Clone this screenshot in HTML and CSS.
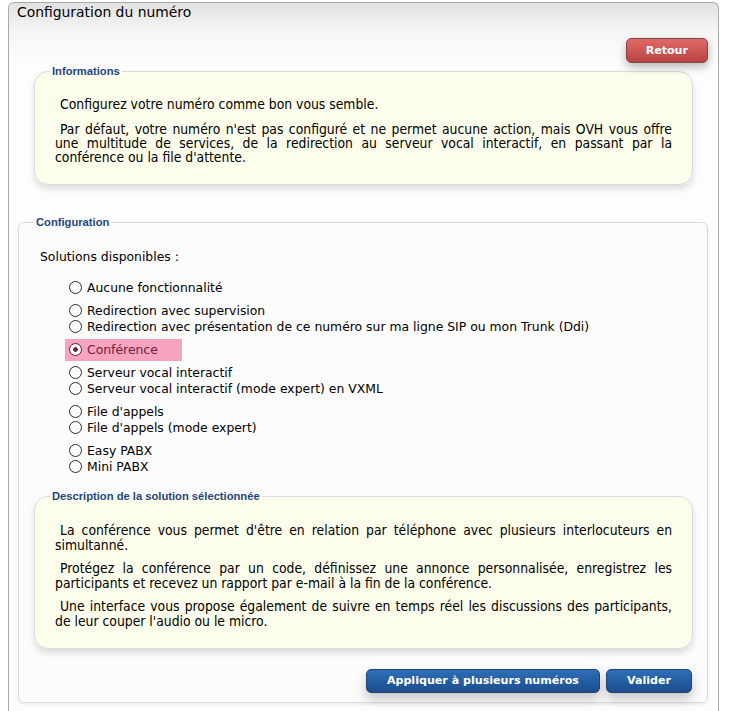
FILE: index.html
```html
<!DOCTYPE html>
<html lang="fr">
<head>
<meta charset="utf-8">
<title>Configuration du numéro</title>
<link rel="stylesheet" href="styles.css">
</head>
<body>
<div class="panel">
  <div class="panel-header">
    <h1 class="panel-title">Configuration du numéro</h1>
  </div>
  <div class="panel-body">
    <div class="top-actions">
      <button class="btn btn-red" type="button">Retour</button>
    </div>

    <fieldset class="box box-note box-info">
      <legend>Informations</legend>
      <p>Configurez votre numéro comme bon vous semble.</p>
      <p>Par défaut, votre numéro n'est pas configuré et ne permet aucune action, mais OVH vous offre une multitude de services, de la redirection au serveur vocal interactif, en passant par la conférence ou la file d'attente.</p>
    </fieldset>

    <fieldset class="box box-config">
      <legend>Configuration</legend>
      <p class="solutions-title">Solutions disponibles :</p>
      <div class="radio-list">
        <div class="radio-group">
          <label class="radio"><input type="radio" name="sol">Aucune fonctionnalité</label>
        </div>
        <div class="radio-group">
          <label class="radio"><input type="radio" name="sol">Redirection avec supervision</label>
          <label class="radio"><input type="radio" name="sol">Redirection avec présentation de ce numéro sur ma ligne SIP ou mon Trunk (Ddi)</label>
        </div>
        <div class="radio-group">
          <label class="radio radio-selected"><input type="radio" name="sol" checked>Conférence</label>
        </div>
        <div class="radio-group">
          <label class="radio"><input type="radio" name="sol">Serveur vocal interactif</label>
          <label class="radio"><input type="radio" name="sol">Serveur vocal interactif (mode expert) en VXML</label>
        </div>
        <div class="radio-group">
          <label class="radio"><input type="radio" name="sol">File d'appels</label>
          <label class="radio"><input type="radio" name="sol">File d'appels (mode expert)</label>
        </div>
        <div class="radio-group">
          <label class="radio"><input type="radio" name="sol">Easy PABX</label>
          <label class="radio"><input type="radio" name="sol">Mini PABX</label>
        </div>
      </div>

      <fieldset class="box box-note box-desc">
        <legend>Description de la solution sélectionnée</legend>
        <p>La conférence vous permet d'être en relation par téléphone avec plusieurs interlocuteurs en simultanné.</p>
        <p>Protégez la conférence par un code, définissez une annonce personnalisée, enregistrez les participants et recevez un rapport par e-mail à la fin de la conférence.</p>
        <p>Une interface vous propose également de suivre en temps réel les discussions des participants, de leur couper l'audio ou le micro.</p>
      </fieldset>

      <div class="bottom-actions">
        <button class="btn btn-blue" type="button">Appliquer à plusieurs numéros</button>
        <button class="btn btn-blue" type="button">Valider</button>
      </div>
    </fieldset>
  </div>
</div>
</body>
</html>
```

FILE: styles.css
```css
html, body {
  margin: 0;
  padding: 0;
  background: #ffffff;
}

body {
  font-family: "DejaVu Sans", sans-serif;
  color: #000;
}

.panel {
  margin: 2px 13px 0 8px;
  border: 1px solid #a9a9a9;
  border-bottom: none;
  border-radius: 6px 6px 0 0;
  background: linear-gradient(#e2e2e2 0, #f6f6f6 30px, #fdfdfd 60px);
  min-height: 740px;
}

.panel-header {
  height: 32px;
  padding: 1px 8px 0;
  box-sizing: border-box;
}

.panel-title {
  margin: 0;
  font-family: "DejaVu Sans", sans-serif;
  font-weight: normal;
  font-size: 13.9px;
  line-height: 17px;
  color: #000;
}

.panel-body {
  padding-top: 3px;
}

.top-actions {
  display: flex;
  justify-content: flex-end;
  padding-right: 10px;
  margin-bottom: 2px;
}

.btn {
  height: 24px;
  padding: 0 20px;
  border-radius: 5px;
  font-family: "DejaVu Sans", sans-serif;
  font-weight: bold;
  font-size: 11.1px;
  color: #fff;
  cursor: pointer;
  line-height: 22px;
}

.btn-red {
  height: 25px;
  padding: 0 19px;
  border: 1px solid #7b4b4b;
  background: linear-gradient(#e06a67, #b84341);
  box-shadow: 0 4px 10px rgba(0, 0, 0, 0.28);
}

.btn-blue {
  border: 1px solid #29446b;
  background: linear-gradient(#2d6fb7, #1c4d8e);
  box-shadow: 0 6px 12px rgba(0, 0, 0, 0.22);
}

.box {
  margin: 0;
  padding: 0 15px;
  min-width: 0;
}

.box legend {
  padding: 0 2px;
  font-family: "Liberation Sans", Arial, sans-serif;
  font-weight: bold;
  font-size: 11.2px;
  line-height: 13px;
  color: #1e4686;
}

.box-note {
  border: 1px solid #d9dae2;
  border-radius: 14px;
  background: #fdfdec;
  box-shadow: 0 4px 6px rgba(0, 0, 0, 0.13);
}

.box-note p {
  margin: 0 5px;
  font-family: "DejaVu Sans Condensed", "DejaVu Sans", sans-serif;
  font-size: 13.8px;
  line-height: 14px;
  text-align: justify;
  text-indent: 5px;
}

.box-info {
  margin: 0 25px 0 25px;
  padding-bottom: 20px;
}

.box-info p:first-of-type {
  margin-top: 19px;
}

.box-info p + p {
  margin-top: 11px;
}

.box-config {
  margin: 31px 10px 0 9px;
  border: 1px solid #d8d9e3;
  border-radius: 6px;
  background: #fcfcfd;
  padding-bottom: 9px;
  padding-right: 14px;
  box-shadow: 0 2px 3px rgba(0, 0, 0, 0.06);
}

.solutions-title {
  margin: 20px 0 0 6px;
  font-size: 12.4px;
  line-height: 15px;
}

.radio-list {
  margin: 16px 0 0 35px;
  display: flex;
  flex-direction: column;
  gap: 7px;
}

.radio-group {
  display: flex;
  flex-direction: column;
}

.radio {
  display: flex;
  align-items: center;
  height: 16px;
  font-size: 12.4px;
  line-height: 16px;
  white-space: nowrap;
}

.radio input {
  appearance: none;
  -webkit-appearance: none;
  width: 13px;
  height: 13px;
  margin: -2px 5px 0 0;
  border: 1px solid #2a2a2a;
  border-radius: 50%;
  background: #fff;
  flex: none;
}

.radio input:checked {
  background: radial-gradient(circle, #6b1f3e 0 2px, transparent 2.6px), #fff;
  border-color: #5a1a34;
}

.radio-selected {
  align-self: flex-start;
  width: 113px;
  height: 22px;
  margin: -3px 0 -3px -4px;
  padding: 0 0 0 4px;
  background: #f7a3be;
  color: #6a1f3f;
}

.box-desc {
  margin: 15px 0 0 0;
  padding-bottom: 19px;
}

.box-desc p {
  line-height: 15px;
}

.box-desc p:first-of-type {
  margin-top: 20px;
}

.box-desc p + p {
  margin-top: 8px;
}

.bottom-actions {
  display: flex;
  justify-content: flex-end;
  gap: 6px;
  margin-top: 20px;
  padding-right: 1px;
}
```
